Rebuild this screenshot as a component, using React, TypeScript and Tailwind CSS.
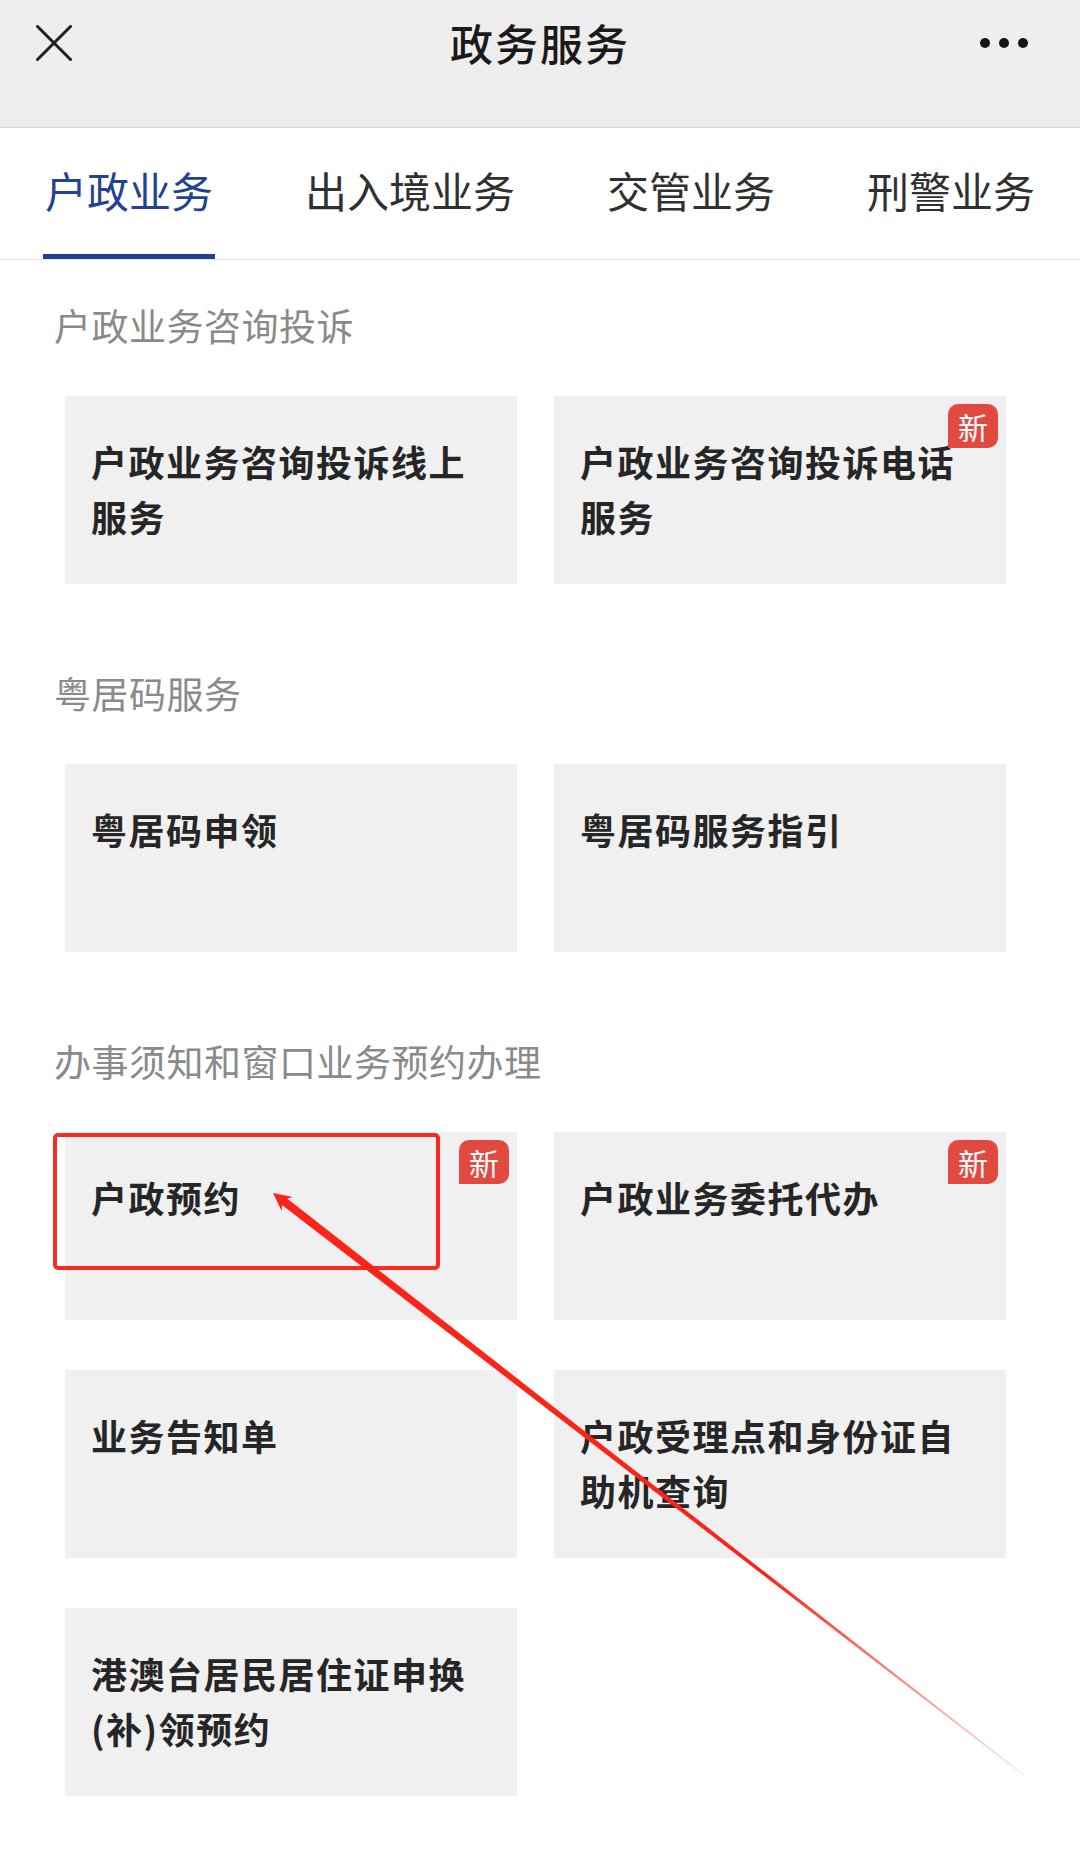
type Item = { label: string; isNew?: boolean }
type Section = { title: string; items: Item[] }

const tabs = ['户政业务', '出入境业务', '交管业务', '刑警业务']

const sections: Section[] = [
  {
    title: '户政业务咨询投诉',
    items: [
      { label: '户政业务咨询投诉线上服务' },
      { label: '户政业务咨询投诉电话服务', isNew: true },
    ],
  },
  {
    title: '粤居码服务',
    items: [{ label: '粤居码申领' }, { label: '粤居码服务指引' }],
  },
  {
    title: '办事须知和窗口业务预约办理',
    items: [
      { label: '户政预约', isNew: true },
      { label: '户政业务委托代办', isNew: true },
      { label: '业务告知单' },
      { label: '户政受理点和身份证自助机查询' },
      { label: '港澳台居民居住证申换(补)领预约' },
    ],
  },
]

function ServiceCard({ item }: { item: Item }) {
  return (
    <div className="relative h-[188px] bg-[#f0f0f0] pt-[38px] pl-[26px] pr-[20px]">
      <p className="text-[36px] font-bold leading-[55px] tracking-[1.5px] text-[#262626]">{item.label}</p>
      {item.isNew && (
        <span className="absolute top-[8px] right-[8px] flex h-[44px] w-[50px] items-center justify-center rounded-[10px] rounded-bl-none bg-[#e24a40] text-[30px] leading-none text-white">
          新
        </span>
      )}
    </div>
  )
}

// red markup drawn over the screenshot
function Annotation() {
  return (
    <svg className="pointer-events-none absolute left-0 top-0" width={1080} height={1876}>
      <defs>
        <linearGradient id="fade" gradientUnits="userSpaceOnUse" x1="281" y1="1199" x2="1025" y2="1776">
          <stop offset="0" stopColor="#fb2418" stopOpacity="1" />
          <stop offset="0.65" stopColor="#fb2418" stopOpacity="1" />
          <stop offset="1" stopColor="#fb2418" stopOpacity="0.15" />
        </linearGradient>
      </defs>
      <rect x="55" y="1135" width="383" height="133" rx="3" fill="none" stroke="#fb2a20" strokeWidth="4" />
      <polygon points="283.6,1195.8 1025.3,1775.7 1024.7,1776.3 278.4,1202.2" fill="url(#fade)" />
      <polygon points="273,1193 292.7,1196.9 282.5,1200.3 281.7,1211.1" fill="#fb2418" />
    </svg>
  )
}

export default function App() {
  return (
    <div className="relative min-h-[1876px] w-full bg-white font-['Noto_Sans_CJK_SC','Liberation_Sans',sans-serif]">
      <div className="h-[128px] border-b border-[#d9d9d9] bg-[#ededed]">
        <div className="flex h-[84px] items-center">
          <div className="w-[200px] pl-[36px] pt-[2px]">
            <svg width="36" height="36" viewBox="0 0 36 36" className="text-[#1f1f1f]">
              <path d="M1.5 1.5L34.5 34.5M34.5 1.5L1.5 34.5" stroke="currentColor" strokeWidth="3" strokeLinecap="round" />
            </svg>
          </div>
          <h1 className="flex-1 text-center text-[43px] font-medium tracking-[2px] text-[#1a1a1a]">政务服务</h1>
          <div className="flex w-[200px] justify-end gap-[9px] pr-[52px] pt-[2px]">
            <span className="h-[10px] w-[10px] rounded-full bg-[#151515]" />
            <span className="h-[10px] w-[10px] rounded-full bg-[#151515]" />
            <span className="h-[10px] w-[10px] rounded-full bg-[#151515]" />
          </div>
        </div>
      </div>

      <div className="flex justify-between border-b border-[#e6e6e6] px-[43px]">
        {tabs.map((tab, idx) => (
          <div
            key={tab}
            className={`flex h-[131px] items-center border-b-[5px] px-[2px] pb-[4px] text-[42px] ${
              idx === 0 ? 'border-[#1f3f96] text-[#24428f]' : 'border-transparent text-[#303030]'
            }`}
          >
            {tab}
          </div>
        ))}
      </div>

      {sections.map((section) => (
        <div key={section.title} className="pt-[41px] pb-[44px]">
          <h2 className="mb-[47px] pl-[54px] text-[37px] leading-[48px] tracking-[0.5px] text-[#8a8a8a]">{section.title}</h2>
          <div className="grid grid-cols-[452px_452px] gap-x-[37px] gap-y-[50px] pl-[65px]">
            {section.items.map((item) => (
              <ServiceCard key={item.label} item={item} />
            ))}
          </div>
        </div>
      ))}

      <Annotation />
    </div>
  )
}
